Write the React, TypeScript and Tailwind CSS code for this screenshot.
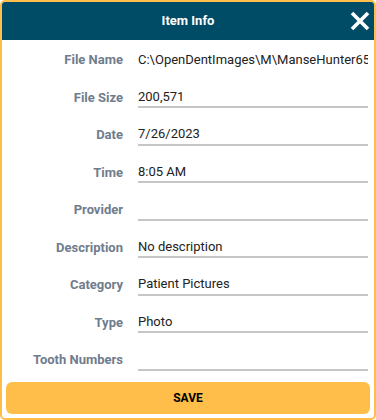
import React from 'react'

const rows: { label: string; value: string; line: boolean }[] = [
  { label: 'File Name', value: 'C:\\OpenDentImages\\M\\ManseHunter6597\\IMG_0001.jpg', line: false },
  { label: 'File Size', value: '200,571', line: true },
  { label: 'Date', value: '7/26/2023', line: true },
  { label: 'Time', value: '8:05 AM', line: true },
  { label: 'Provider', value: '', line: true },
  { label: 'Description', value: 'No description', line: true },
  { label: 'Category', value: 'Patient Pictures', line: true },
  { label: 'Type', value: 'Photo', line: true },
  { label: 'Tooth Numbers', value: '', line: true },
]

export default function App() {
  return (
    <div
      className="w-[376px] h-[420px] bg-white border-2 border-[#ffbe4a] rounded-[5px] overflow-hidden flex flex-col"
      style={{ fontFamily: 'Roboto, "Noto Sans", sans-serif' }}
    >
      {/* Header */}
      <div className="relative h-[38px] shrink-0 bg-[#004b66] flex items-center justify-center">
        <span className="text-white font-bold text-[13px]">Item Info</span>
        <svg
          className="absolute right-[3px] top-[8px]"
          width="22"
          height="22"
          viewBox="0 0 22 22"
        >
          <path d="M3 3 L19 19 M19 3 L3 19" stroke="white" strokeWidth="3.6" strokeLinecap="butt" />
        </svg>
      </div>

      {/* Fields */}
      <div className="flex flex-col pt-[1px]">
        {rows.map((r) => (
          <div key={r.label} className="h-[37.5px] flex items-center">
            <div className="w-[121px] shrink-0 text-right text-[13px] font-bold text-[#6f7c8c]">
              {r.label}
            </div>
            <div
              className={
                'ml-[15px] mr-[6px] flex-1 min-w-0 h-[22px] flex items-center text-[13px] text-[#222] whitespace-nowrap overflow-hidden ' +
                (r.line ? 'border-b-2 border-[#c6c6c6]' : '')
              }
            >
              {r.value}
            </div>
          </div>
        ))}
      </div>

      {/* Save */}
      <div className="mt-auto px-[4px] pb-[4px]">
        <button className="w-full h-[32px] rounded-[6px] bg-[#ffbe4a] text-[12px] font-bold text-black">
          SAVE
        </button>
      </div>
    </div>
  )
}
